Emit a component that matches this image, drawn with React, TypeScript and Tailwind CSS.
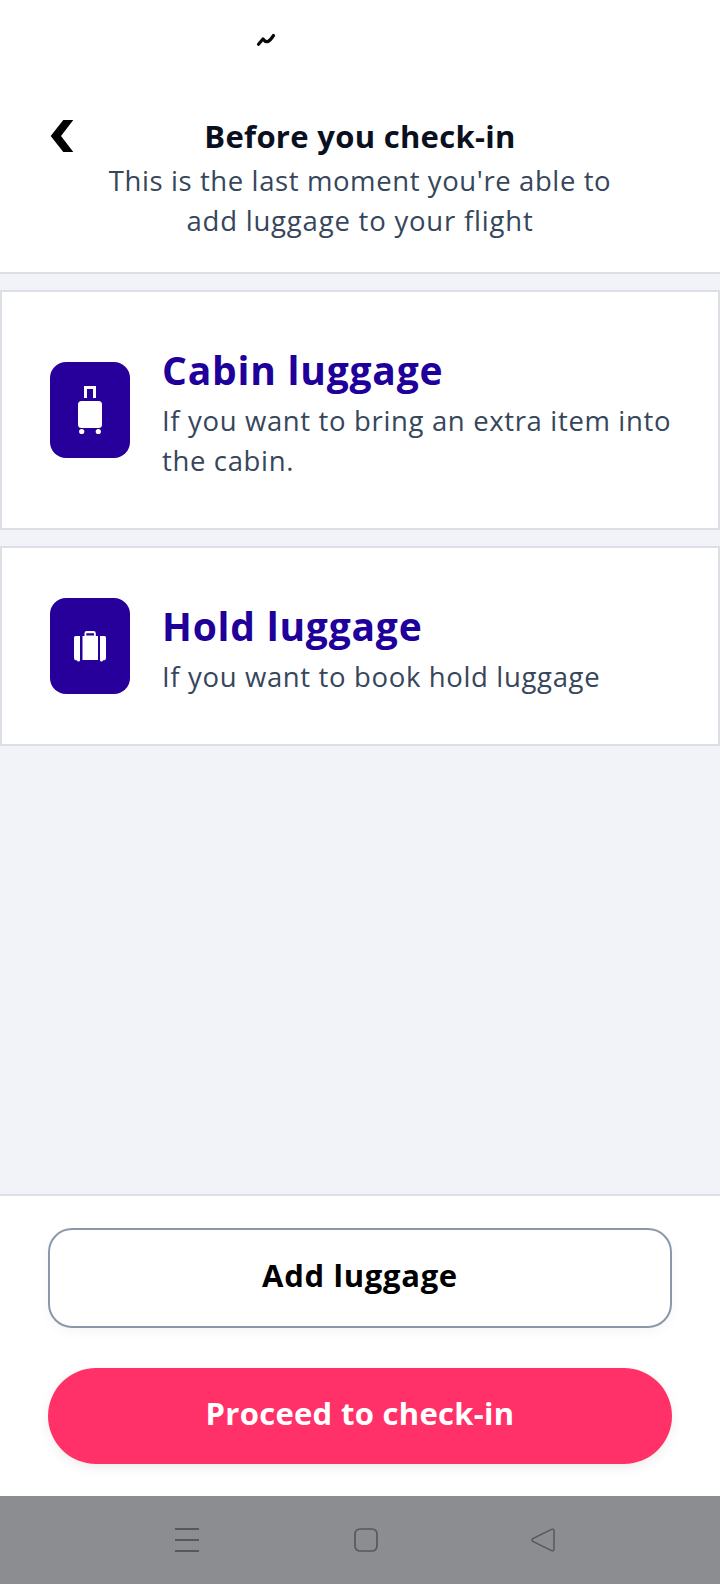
import type { ReactNode } from "react";

interface LuggageCardProps {
  icon: ReactNode;
  title: ReactNode;
  children: ReactNode;
}

function CabinIcon() {
  return (
    <svg width="80" height="96" viewBox="0 0 80 96" fill="#fff">
      <path d="M34 24h12v12h-3v-9h-6v9h-3z" />
      <rect x="28" y="39" width="24" height="27" rx="3.5" />
      <circle cx="31.7" cy="69.5" r="2.6" />
      <circle cx="48.3" cy="69.5" r="2.6" />
    </svg>
  );
}

function HoldIcon() {
  return (
    <svg width="80" height="96" viewBox="0 0 80 96" fill="#fff">
      <path
        d="M34.5 38v-2.8q0-2.2 2.2-2.2h6.900q2.200 0 2.200 2.200V38H48v24H32.500V38zM36.300 35.200V37.500h7.700v-2.300z"
        fillRule="evenodd"
      />
      <path d="M25.500 38H30v24.300q0 1.200-1.500 1.200T27 62.200h-1.500Q24 62 24 60V39.500q0-1.500 1.500-1.500z" />
      <path d="M54.500 38H50v24.300q0 1.200 1.500 1.200T53 62.200h1.500Q56 62 56 60V39.500q0-1.500-1.500-1.500z" />
    </svg>
  );
}

function LuggageCard({ icon, title, children }: LuggageCardProps) {
  return (
    <section className="flex items-center gap-8 border-2 border-[#dcdfe6] bg-white p-12">
      <div className="h-24 w-20 shrink-0 overflow-hidden rounded-2xl bg-[#27009b]">
        {icon}
      </div>
      <div className="whitespace-nowrap">
        <h2 className="h-[60px] text-[39px] leading-[60px] font-bold tracking-[0.8px] text-[#20009a]">
          {title}
        </h2>
        <p className="mt-px -mb-px text-[27.5px] leading-[40px] tracking-[0.65px] text-[#36465b]">
          {children}
        </p>
      </div>
    </section>
  );
}

export default function App() {
  return (
    <div className="flex h-[1584px] w-[720px] flex-col overflow-hidden bg-[#f2f3f8] font-['Open_Sans',sans-serif]">
      {/* Status bar */}
      <div className="flex h-20 shrink-0 bg-white pt-[33px] pl-[256px]">
        <svg width="20" height="14" viewBox="0 0 20 14" fill="none" stroke="#080808" strokeWidth="3.2" strokeLinecap="round" strokeLinejoin="round">
          <path d="M2.500 11.200 7 6q2.500 3.500 5 2.500 2-.8 5.500-6" />
        </svg>
      </div>

      {/* Header */}
      <header className="flex h-[194px] shrink-0 border-b-2 border-[#dcdfe6] bg-white px-12 pt-8">
        <button className="mt-2 h-8 w-[30px] shrink-0">
          <svg width="30" height="32" viewBox="0 0 30 32">
            <path d="M15.300 0h10L13 16l12.300 16h-10L2.700 16z" />
          </svg>
        </button>
        <div className="mr-[30px] flex-1 text-center whitespace-nowrap">
          <h1 className="text-[31px] leading-[48px] font-bold tracking-[0.3px] text-[#0a1020]">
            Before you check-in
          </h1>
          <p className="mt-px text-[27.5px] leading-[40px] tracking-[0.6px] text-[#36465b]">
            This is the last moment you're able to
            <br />
            <span className="tracking-[0.8px]">add luggage to your flight</span>
          </p>
        </div>
      </header>

      {/* Luggage options */}
      <main className="flex flex-1 flex-col gap-4 pt-4">
        <LuggageCard icon={<CabinIcon />} title="Cabin luggage">
          If you want to bring an extra item into
          <br />
          the cabin.
        </LuggageCard>
        <LuggageCard icon={<HoldIcon />} title="Hold luggage">
          If you want to book hold luggage
        </LuggageCard>
      </main>

      {/* Actions */}
      <footer className="flex h-[302px] shrink-0 flex-col gap-10 border-t-2 border-[#dcdfe6] bg-white px-12 pt-8">
        <button className="h-[100px] rounded-3xl border-2 border-[#8b98aa] bg-white pb-1.5 text-[31px] font-bold tracking-[0.7px] text-black shadow-[0_4px_12px_rgba(0,0,0,0.04)]">
          Add luggage
        </button>
        <button className="h-24 rounded-full bg-[#ff3168] pb-1.5 text-[31px] font-bold tracking-[0.3px] text-white shadow-[0_4px_12px_rgba(80,0,30,0.08)]">
          Proceed to check-in
        </button>
      </footer>

      {/* System navigation */}
      <nav className="flex h-[88px] shrink-0 items-center bg-[#8c8d91] pl-[175px]">
        <svg width="24" height="24" viewBox="0 0 24 24" stroke="#57585b" strokeWidth="2">
          <path d="M0 1h24M0 12h24M0 23h24" />
        </svg>
        <svg className="ml-[155px]" width="24" height="24" viewBox="0 0 24 24" fill="none" stroke="#57585b" strokeWidth="1.700">
          <rect x="1" y="1" width="22" height="22" rx="5" />
        </svg>
        <svg className="ml-[153px]" width="24" height="24" viewBox="0 0 24 24" fill="none" stroke="#57585b" strokeWidth="1.500">
          <path d="M1.800 10.700Q0 12 1.800 13.300L20.500 22.600Q23 23.300 23 21V3Q23 .7 20.500 1.400z" />
        </svg>
      </nav>
    </div>
  );
}
